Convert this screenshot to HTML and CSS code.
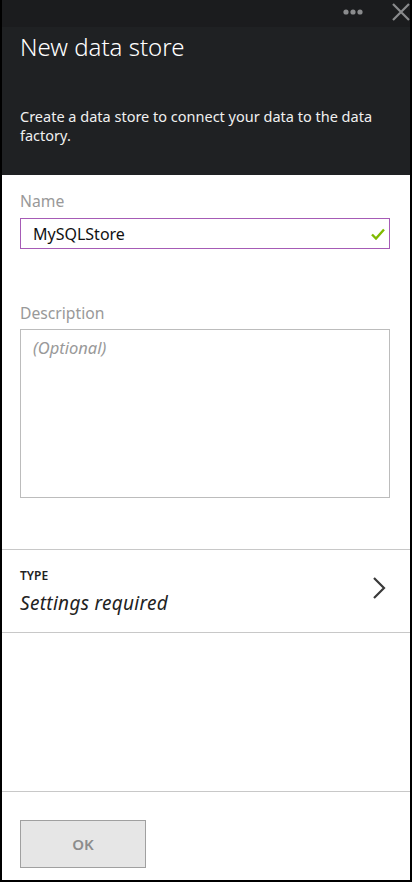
FILE: index.html
```html
<!DOCTYPE html>
<html>
<head>
<meta charset="utf-8">
<link rel="stylesheet" href="styles.css">
</head>
<body>
<div class="blade">
  <div class="topbar">
    <svg class="dots" width="20" height="6" viewBox="0 0 20 6"><circle cx="3" cy="3" r="2.6" fill="#8a8b8d"/><circle cx="10" cy="3" r="2.6" fill="#8a8b8d"/><circle cx="17" cy="3" r="2.6" fill="#8a8b8d"/></svg>
    <svg class="close" width="18" height="18" viewBox="0 0 18 18"><path d="M1 1 L17 17 M17 1 L1 17" stroke="#8a8b8d" stroke-width="2.2"/></svg>
  </div>
  <div class="header">
    <h1 class="title">New data store</h1>
    <p class="subtitle">Create a data store to connect your data to the data factory.</p>
  </div>
  <div class="content">
    <div class="field">
      <div class="label">Name</div>
      <div class="input">
        <span class="value">MySQLStore</span>
        <svg class="check" width="14" height="12" viewBox="0 0 14 12"><path d="M1 6.5 L5 10.5 L13 1.5" fill="none" stroke="#7fba00" stroke-width="2.4"/></svg>
      </div>
    </div>
    <div class="field desc">
      <div class="label">Description</div>
      <div class="textarea"><span class="placeholder">(Optional)</span></div>
    </div>
    <div class="type-row">
      <div class="type-text">
        <div class="type-label">TYPE</div>
        <div class="type-value">Settings required</div>
      </div>
      <svg class="chev" width="14" height="22" viewBox="0 0 14 22"><path d="M2 1 L12 11 L2 21" fill="none" stroke="#3a3a3a" stroke-width="2.2"/></svg>
    </div>
    <div class="spacer"></div>
    <div class="footer">
      <div class="ok">OK</div>
    </div>
  </div>
</div>
</body>
</html>
```

FILE: styles.css
```css
html, body {
  margin: 0;
  padding: 0;
  background: #000;
}
body {
  font-family: "Noto Sans", "Open Sans", sans-serif;
}
.blade {
  margin: 0 2px;
  height: 880px;
  display: flex;
  flex-direction: column;
  background: #fff;
}
.topbar {
  height: 27px;
  background: #1b1c1e;
  display: flex;
  align-items: flex-start;
  justify-content: flex-end;
  box-sizing: border-box;
}
.dots {
  margin-top: 9px;
  margin-right: 29px;
}
.close {
  margin-top: 3px;
  margin-right: 0;
}
.header {
  height: 148px;
  background: #1f2123;
  padding: 0 18px;
  color: #fff;
  box-sizing: border-box;
}
.title {
  margin: 0;
  padding-top: 4px;
  font-weight: 300;
  font-size: 24px;
  line-height: 32px;
  letter-spacing: 0;
}
.subtitle {
  margin: 0;
  margin-top: 44px;
  font-size: 14.5px;
  line-height: 19px;
  color: #f0f0f0;
}
.content {
  flex: 1;
  display: flex;
  flex-direction: column;
}
.field {
  padding: 0 20px 0 18px;
}
.label {
  color: #999;
  font-size: 15.7px;
  line-height: 20px;
  margin-top: 16px;
  height: 27px;
}
.input {
  height: 31px;
  border: 1px solid #a65bb6;
  box-sizing: border-box;
  display: flex;
  align-items: center;
  justify-content: space-between;
  padding: 0 4px 0 12px;
}
.value {
  font-size: 16px;
  color: #111;
}
.check {
  margin-top: 1px;
}
.desc .label {
  margin-top: 54px;
  height: 26px;
}
.textarea {
  height: 169px;
  border: 1px solid #bcbcbc;
  box-sizing: border-box;
  padding: 6px 12px;
}
.placeholder {
  font-size: 16.5px;
  font-style: italic;
  color: #999;
}
.type-row {
  margin-top: 51px;
  height: 84px;
  border-top: 1px solid #c8c8c8;
  border-bottom: 1px solid #c8c8c8;
  box-sizing: border-box;
  display: flex;
  align-items: flex-start;
  justify-content: space-between;
  padding: 19px 24px 0 18px;
}
.type-label {
  font-size: 12px;
  font-weight: 600;
  color: #222;
  line-height: 14px;
}
.type-value {
  font-size: 19px;
  font-style: italic;
  color: #222;
  margin-top: 8px;
  line-height: 24px;
  letter-spacing: 0.3px;
}
.chev {
  margin-top: 8px;
}
.spacer {
  flex: 1;
}
.footer {
  height: 89px;
  border-top: 1px solid #c8c8c8;
  box-sizing: border-box;
  padding: 28px 18px 0;
}
.ok {
  width: 126px;
  height: 48px;
  box-sizing: border-box;
  border: 1px solid #a0a0a0;
  background: #e6e6e6;
  color: #8c8c8c;
  font-weight: 600;
  font-size: 15px;
  display: flex;
  align-items: center;
  justify-content: center;
}
```
